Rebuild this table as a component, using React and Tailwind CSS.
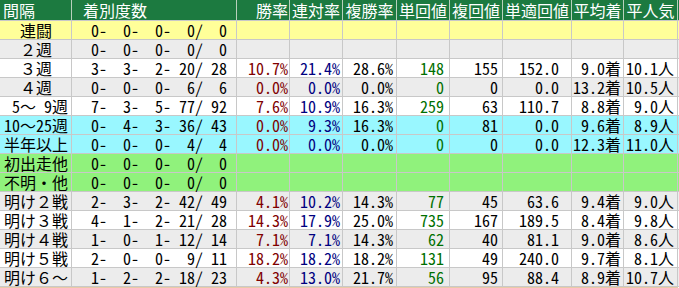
const cols = 'grid grid-cols-[72px_165px_53px_53px_54px_53px_53px_69px_52px_54px]';

const headers = [
  { t: '間隔', c: 'justify-start pl-[3px]' },
  { t: '着別度数', c: 'justify-start pl-[11px]' },
  { t: '勝率', c: 'justify-end pr-[1px]' },
  { t: '連対率', c: 'justify-center' },
  { t: '複勝率', c: 'justify-center' },
  { t: '単回値', c: 'justify-center' },
  { t: '複回値', c: 'justify-center' },
  { t: '単適回値', c: 'justify-center' },
  { t: '平均着', c: 'justify-center' },
  { t: '平人気', c: 'justify-center' },
];

const bgs = {
  y: 'bg-[#ffff99]',
  g: 'bg-[#ececec]',
  w: 'bg-white',
  c: 'bg-[#99f7ff]',
  n: 'bg-[#90f27c]',
};

const rows = [
  ['　連闘', 'y', '  0-  0-  0-  0/  0'],
  ['　２週', 'g', '  0-  0-  0-  0/  0'],
  ['　３週', 'w', '  3-  3-  2- 20/ 28', '10.7%', '21.4%', '28.6%', '148', '155', '152.0', '9.0着', '10.1人'],
  ['　４週', 'g', '  0-  0-  0-  6/  6', '0.0%', '0.0%', '0.0%', '0', '0', '0.0', '13.2着', '10.5人'],
  [' 5～ 9週', 'w', '  7-  3-  5- 77/ 92', '7.6%', '10.9%', '16.3%', '259', '63', '110.7', '8.8着', '9.0人'],
  ['10～25週', 'c', '  0-  4-  3- 36/ 43', '0.0%', '9.3%', '16.3%', '0', '81', '0.0', '9.6着', '8.9人'],
  ['半年以上', 'c', '  0-  0-  0-  4/  4', '0.0%', '0.0%', '0.0%', '0', '0', '0.0', '12.3着', '11.0人'],
  ['初出走他', 'n', '  0-  0-  0-  0/  0'],
  ['不明・他', 'n', '  0-  0-  0-  0/  0'],
  ['明け２戦', 'g', '  2-  3-  2- 42/ 49', '4.1%', '10.2%', '14.3%', '77', '45', '63.6', '9.4着', '9.0人'],
  ['明け３戦', 'w', '  4-  1-  2- 21/ 28', '14.3%', '17.9%', '25.0%', '735', '167', '189.5', '8.4着', '9.8人'],
  ['明け４戦', 'g', '  1-  0-  1- 12/ 14', '7.1%', '7.1%', '14.3%', '62', '40', '81.1', '9.0着', '8.6人'],
  ['明け５戦', 'w', '  2-  0-  0-  9/ 11', '18.2%', '18.2%', '18.2%', '131', '49', '240.0', '9.7着', '8.1人'],
  ['明け６～', 'g', '  1-  2-  2- 18/ 23', '4.3%', '13.0%', '21.7%', '56', '95', '88.4', '8.9着', '10.7人'],
];

// right padding + colour per numeric column
const numCols = [
  'pr-[9px] text-black',
  'pr-[1px] text-[#800000]',
  'pr-[2px] text-[#000080]',
  'pr-[3px] text-black',
  'pr-[5px] text-[#007000]',
  'pr-[4px] text-black',
  'pr-[12px] text-black',
  'pr-[2px] text-black',
  'pr-[3px] text-black',
];

// half-width ASCII (digits, spaces) rendered at 0.5em like the original fixed-pitch font
function Label({ text }) {
  return text.split(/([ 0-9]+)/).map((part, i) =>
    /^[ 0-9]+$/.test(part) ? (
      <span key={i} className="[font-feature-settings:'hwid']">
        {part.replace(/ /g, '\u2002')}
      </span>
    ) : (
      <span key={i}>{part}</span>
    )
  );
}

export default function App() {
  return (
    <div className="w-[679px] h-[288px] bg-white text-[16px] leading-[19px] font-['Noto_Sans_CJK_JP','Noto_Sans_CJK_SC',sans-serif] overflow-hidden">
      <div className={`${cols} h-[21px] bg-[#1c7a40] text-white border-b border-[#c8c8c8]`}>
        {headers.map((h, i) => (
          <div key={i} className={`flex items-center whitespace-pre border-r border-[#b8d0bc] ${h.c}`}>
            {h.t}
          </div>
        ))}
      </div>
      {rows.map(([label, bg, rec, ...vals], r) => (
        <div key={r} className={`${cols} h-[19px] border-b border-[#c8c8c8] ${bgs[bg]}`}>
          <div className="flex items-center whitespace-pre pl-[4px] border-r border-[#c8c8c8]">
            <Label text={label} />
          </div>
          {[rec, ...Array.from({ length: 8 }, (_, i) => vals[i] ?? '')].map((v, i) => (
            <div
              key={i}
              className={`flex items-center justify-end whitespace-pre border-r border-[#c8c8c8] [font-feature-settings:'hwid'] ${numCols[i]}`}
            >
              {v}
            </div>
          ))}
        </div>
      ))}
      <div className="w-[678px] h-[4px] bg-[#e9c9a6]" />
    </div>
  );
}
